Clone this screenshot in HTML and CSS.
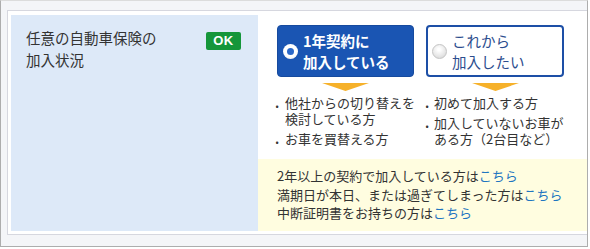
FILE: index.html
```html
<!DOCTYPE html>
<html lang="ja">
<head>
<meta charset="utf-8">
<link rel="stylesheet" href="styles.css">
</head>
<body>
<div class="frame">
  <div class="card">
    <div class="label-cell">
      <div class="label-title">任意の自動車保険の<br>加入状況</div>
      <span class="badge">OK</span>
    </div>
    <div class="choice-cell">
      <div class="buttons">
        <div class="choice choice-on">
          <span class="radio radio-on"><span class="radio-dot"></span></span>
          <span class="choice-text">1年契約に<br>加入している</span>
        </div>
        <div class="choice choice-off">
          <span class="radio radio-off"></span>
          <span class="choice-text">これから<br>加入したい</span>
        </div>
      </div>
      <div class="arrows">
        <div class="arrow-box"><svg width="47" height="8" viewBox="0 0 47 8"><polygon points="0,0 47,0 23.5,8" fill="#f6b12a"/></svg></div>
        <div class="arrow-box"><svg width="47" height="8" viewBox="0 0 47 8"><polygon points="0,0 47,0 23.5,8" fill="#f6b12a"/></svg></div>
      </div>
      <div class="lists">
        <ul class="list">
          <li>他社からの切り替えを<br>検討している方</li>
          <li>お車を買替える方</li>
        </ul>
        <ul class="list list-2">
          <li>初めて加入する方</li>
          <li>加入していないお車が<br>ある方（2台目など）</li>
        </ul>
      </div>
      <div class="notes">
        <p>2年以上の契約で加入している方は<a href="#">こちら</a></p>
        <p>満期日が本日、または過ぎてしまった方は<a href="#">こちら</a></p>
        <p>中断証明書をお持ちの方は<a href="#">こちら</a></p>
      </div>
    </div>
  </div>
</div>
</body>
</html>
```
FILE: styles.css
```css
html, body {
  margin: 0;
  padding: 0;
  background: #ffffff;
}
body {
  width: 590px;
  height: 249px;
  overflow: hidden;
  font-family: "Noto Sans CJK JP", "Noto Sans", sans-serif;
  color: #333333;
}
.frame {
  width: 588px;
  height: 247px;
  box-sizing: border-box;
  border: 1px solid #adadad;
  border-top-color: #dcdcdc;
  background: #f4f5f8;
  padding: 9px 0 0 6px;
  overflow: hidden;
}
.card {
  display: flex;
  width: 620px;
  height: 216px;
  padding: 4px 3px 3px 3px;
  background: #ffffff;
  border: 1px solid #d6d7df;
}
.label-cell {
  width: 247px;
  flex: none;
  box-sizing: border-box;
  background: #dde9f8;
  display: flex;
  justify-content: space-between;
  align-items: flex-start;
  padding: 12px 17px 0 15px;
}
.label-title {
  font-size: 14.5px;
  line-height: 22px;
  color: #333;
}
.badge {
  margin-top: 5px;
  width: 35px;
  height: 18px;
  border-radius: 2px;
  background: #15963a;
  color: #fff;
  font-family: "Liberation Sans", Arial, sans-serif;
  font-weight: bold;
  font-size: 13px;
  line-height: 18px;
  text-align: center;
  letter-spacing: 0.5px;
}
.choice-cell {
  flex: 1;
  display: flex;
  flex-direction: column;
  padding-top: 10px;
}
.buttons {
  display: flex;
  gap: 12px;
  padding-left: 19px;
}
.choice {
  box-sizing: border-box;
  height: 52px;
  border-radius: 4px;
  display: flex;
  align-items: center;
  padding-left: 5px;
  gap: 5px;
}
.choice-on {
  width: 137px;
  background: #1a55b3;
  border: 1px solid #164a9e;
  color: #fff;
  font-weight: bold;
}
.choice-off {
  width: 138px;
  background: #fff;
  border: 2px solid #1d4fa6;
  padding-left: 4px;
  color: #2c4d8e;
}
.choice-text {
  font-size: 14.5px;
  line-height: 21px;
}
.radio {
  width: 15px;
  height: 15px;
  border-radius: 50%;
  box-sizing: border-box;
  flex: none;
  display: flex;
  align-items: center;
  justify-content: center;
}
.radio-on {
  background: radial-gradient(circle at 50% 40%, #ffffff 55%, #dfe4ec 100%);
}
.radio-dot {
  width: 7px;
  height: 7px;
  border-radius: 50%;
  background: #2a68c9;
}
.radio-off {
  border: 1px solid #c4c4c4;
  background: radial-gradient(circle at 45% 35%, #ffffff 10%, #e6e6e6 60%, #cfcfcf 100%);
}
.arrows {
  display: flex;
  gap: 12px;
  padding-left: 19px;
  margin-top: 6px;
  height: 8px;
}
.arrow-box {
  width: 137px;
  display: flex;
  justify-content: center;
}
.arrow-box + .arrow-box {
  width: 138px;
}
.arrow-box svg {
  display: block;
}
.lists {
  display: flex;
  padding-left: 17px;
  margin-top: 4px;
}
.list {
  list-style: none;
  margin: 0;
  padding: 0;
  width: 150px;
  font-size: 13px;
  line-height: 16px;
}
.list li {
  display: flex;
}
.list li::before {
  content: ".";
  width: 10px;
  flex: none;
  font-weight: bold;
}
.list li + li {
  margin-top: 4px;
}
.list-2 li::before {
  width: 9px;
}
.notes {
  margin-top: auto;
  height: 72px;
  box-sizing: border-box;
  background: #fffde0;
  padding: 8px 0 0 19px;
  font-size: 13px;
  line-height: 18.5px;
}
.notes p {
  margin: 0;
}
.notes a {
  color: #1f76c0;
  text-decoration: none;
}
```
